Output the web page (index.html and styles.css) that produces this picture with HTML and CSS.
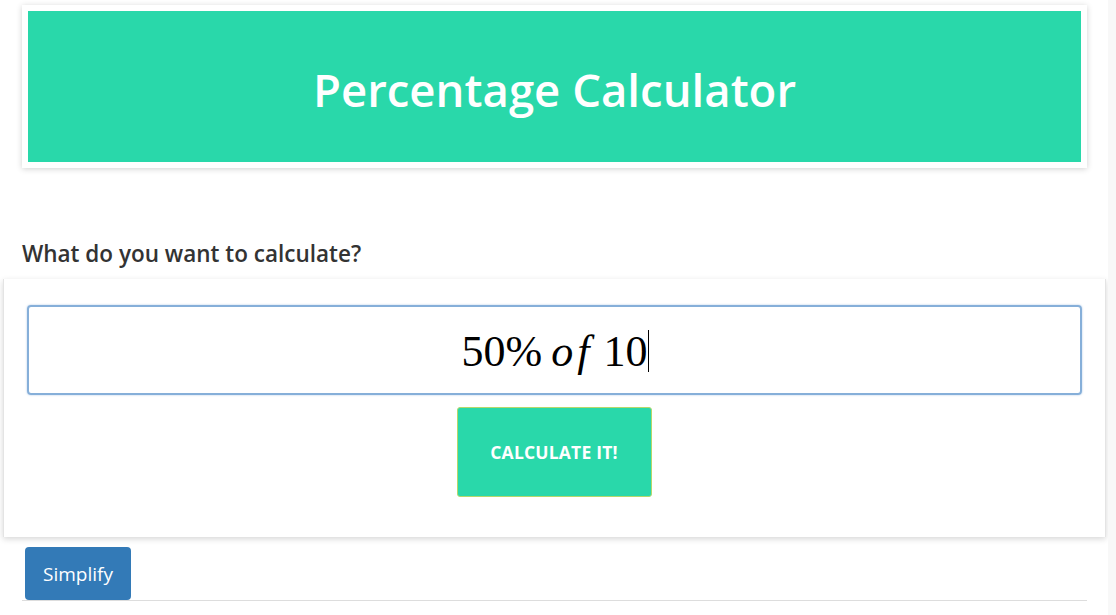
FILE: index.html
```html
<!DOCTYPE html>
<html>
<head>
<meta charset="utf-8">
<link rel="stylesheet" href="styles.css">
</head>
<body>
<div class="page">
  <div class="main">
    <header class="banner">
      <div class="banner-inner">
        <h1 class="title">Percentage Calculator</h1>
      </div>
    </header>
    <h2 class="question">What do you want to calculate?</h2>
    <section class="card">
      <div class="math-input">
        <span class="math"><span class="num">50%</span><span class="var">o</span><span class="var f">f</span><span class="num n2">10</span><span class="caret"></span></span>
      </div>
      <div class="actions">
        <button class="calc-btn">CALCULATE IT!</button>
      </div>
    </section>
    <div class="footer-row">
      <button class="simplify-btn">Simplify</button>
    </div>
  </div>
  <div class="gutter"></div>
</div>
</body>
</html>
```
FILE: styles.css
```css
html, body {
  margin: 0;
  padding: 0;
  background: #ffffff;
}
body {
  font-family: "Open Sans", "Noto Sans", sans-serif;
  color: #333;
}
.page {
  display: flex;
  height: 615px;
  overflow: hidden;
}
.main {
  width: 1108px;
  flex: none;
}
.gutter {
  flex: 1;
  background: #f8f8f8;
}
.banner {
  margin: 5px 0 0 22px;
  width: 1065px;
  box-sizing: border-box;
  padding: 6px;
  background: #fff;
  box-shadow: 0 1px 6px rgba(0,0,0,0.18);
}
.banner-inner {
  height: 151px;
  background: #29d8aa;
  display: flex;
  align-items: center;
  justify-content: center;
}
.title {
  margin: 0;
  color: #fff;
  font-weight: 600;
  font-size: 45.5px;
  letter-spacing: 0;
  position: relative;
  top: 2px;
}
.question {
  margin: 0;
  padding: 71px 0 0 22px;
  height: 40px;
  font-size: 22.5px;
  font-weight: 600;
  color: #333;
  line-height: 30px;
}
.card {
  margin-left: 3px;
  width: 1103px;
  box-sizing: border-box;
  background: #fff;
  border-left: 1px solid #e4e4e4;
  border-right: 1px solid #e4e4e4;
  box-shadow: 0 2px 6px rgba(0,0,0,0.16);
  padding: 26px 0 40px 0;
}
.math-input {
  margin-left: 23px;
  width: 1055px;
  height: 90px;
  box-sizing: border-box;
  border: 2px solid #86afd9;
  border-radius: 4px;
  box-shadow: 0 0 2px rgba(102,152,212,0.6);
  display: flex;
  align-items: center;
  justify-content: center;
}
.math {
  font-family: "Liberation Serif", "Times New Roman", serif;
  font-size: 44px;
  color: #000;
  display: inline-flex;
  align-items: center;
  position: relative;
  top: 1px;
  left: 1px;
}
.var {
  font-style: italic;
}
.num {
  margin-right: 9px;
}
.f {
  margin-left: 4px;
  margin-right: 14px;
}
.n2 {
  margin-right: 0;
}
.caret {
  display: inline-block;
  width: 1px;
  height: 42px;
  background: #000;
  margin-left: 1px;
}
.actions {
  display: flex;
  justify-content: center;
  margin-top: 12px;
}
.calc-btn {
  width: 195px;
  height: 90px;
  background: #29d8aa;
  border: 1px solid #b5d86b;
  border-radius: 3px;
  color: #fff;
  font-family: "Open Sans", "Noto Sans", sans-serif;
  font-weight: 700;
  font-size: 17.5px;
  letter-spacing: 0.2px;
  padding: 0;
  margin-left: -1px;
}
.footer-row {
  margin: 10px 0 0 22px;
  width: 1062px;
  border-bottom: 1px solid #ddd;
  padding-left: 3px;
  height: 53px;
  box-sizing: content-box;
}
.simplify-btn {
  width: 106px;
  height: 53px;
  background: #337ab7;
  border: none;
  border-radius: 4px;
  color: #fff;
  font-family: "Open Sans", "Noto Sans", sans-serif;
  font-size: 19px;
  padding: 0;
}
```
